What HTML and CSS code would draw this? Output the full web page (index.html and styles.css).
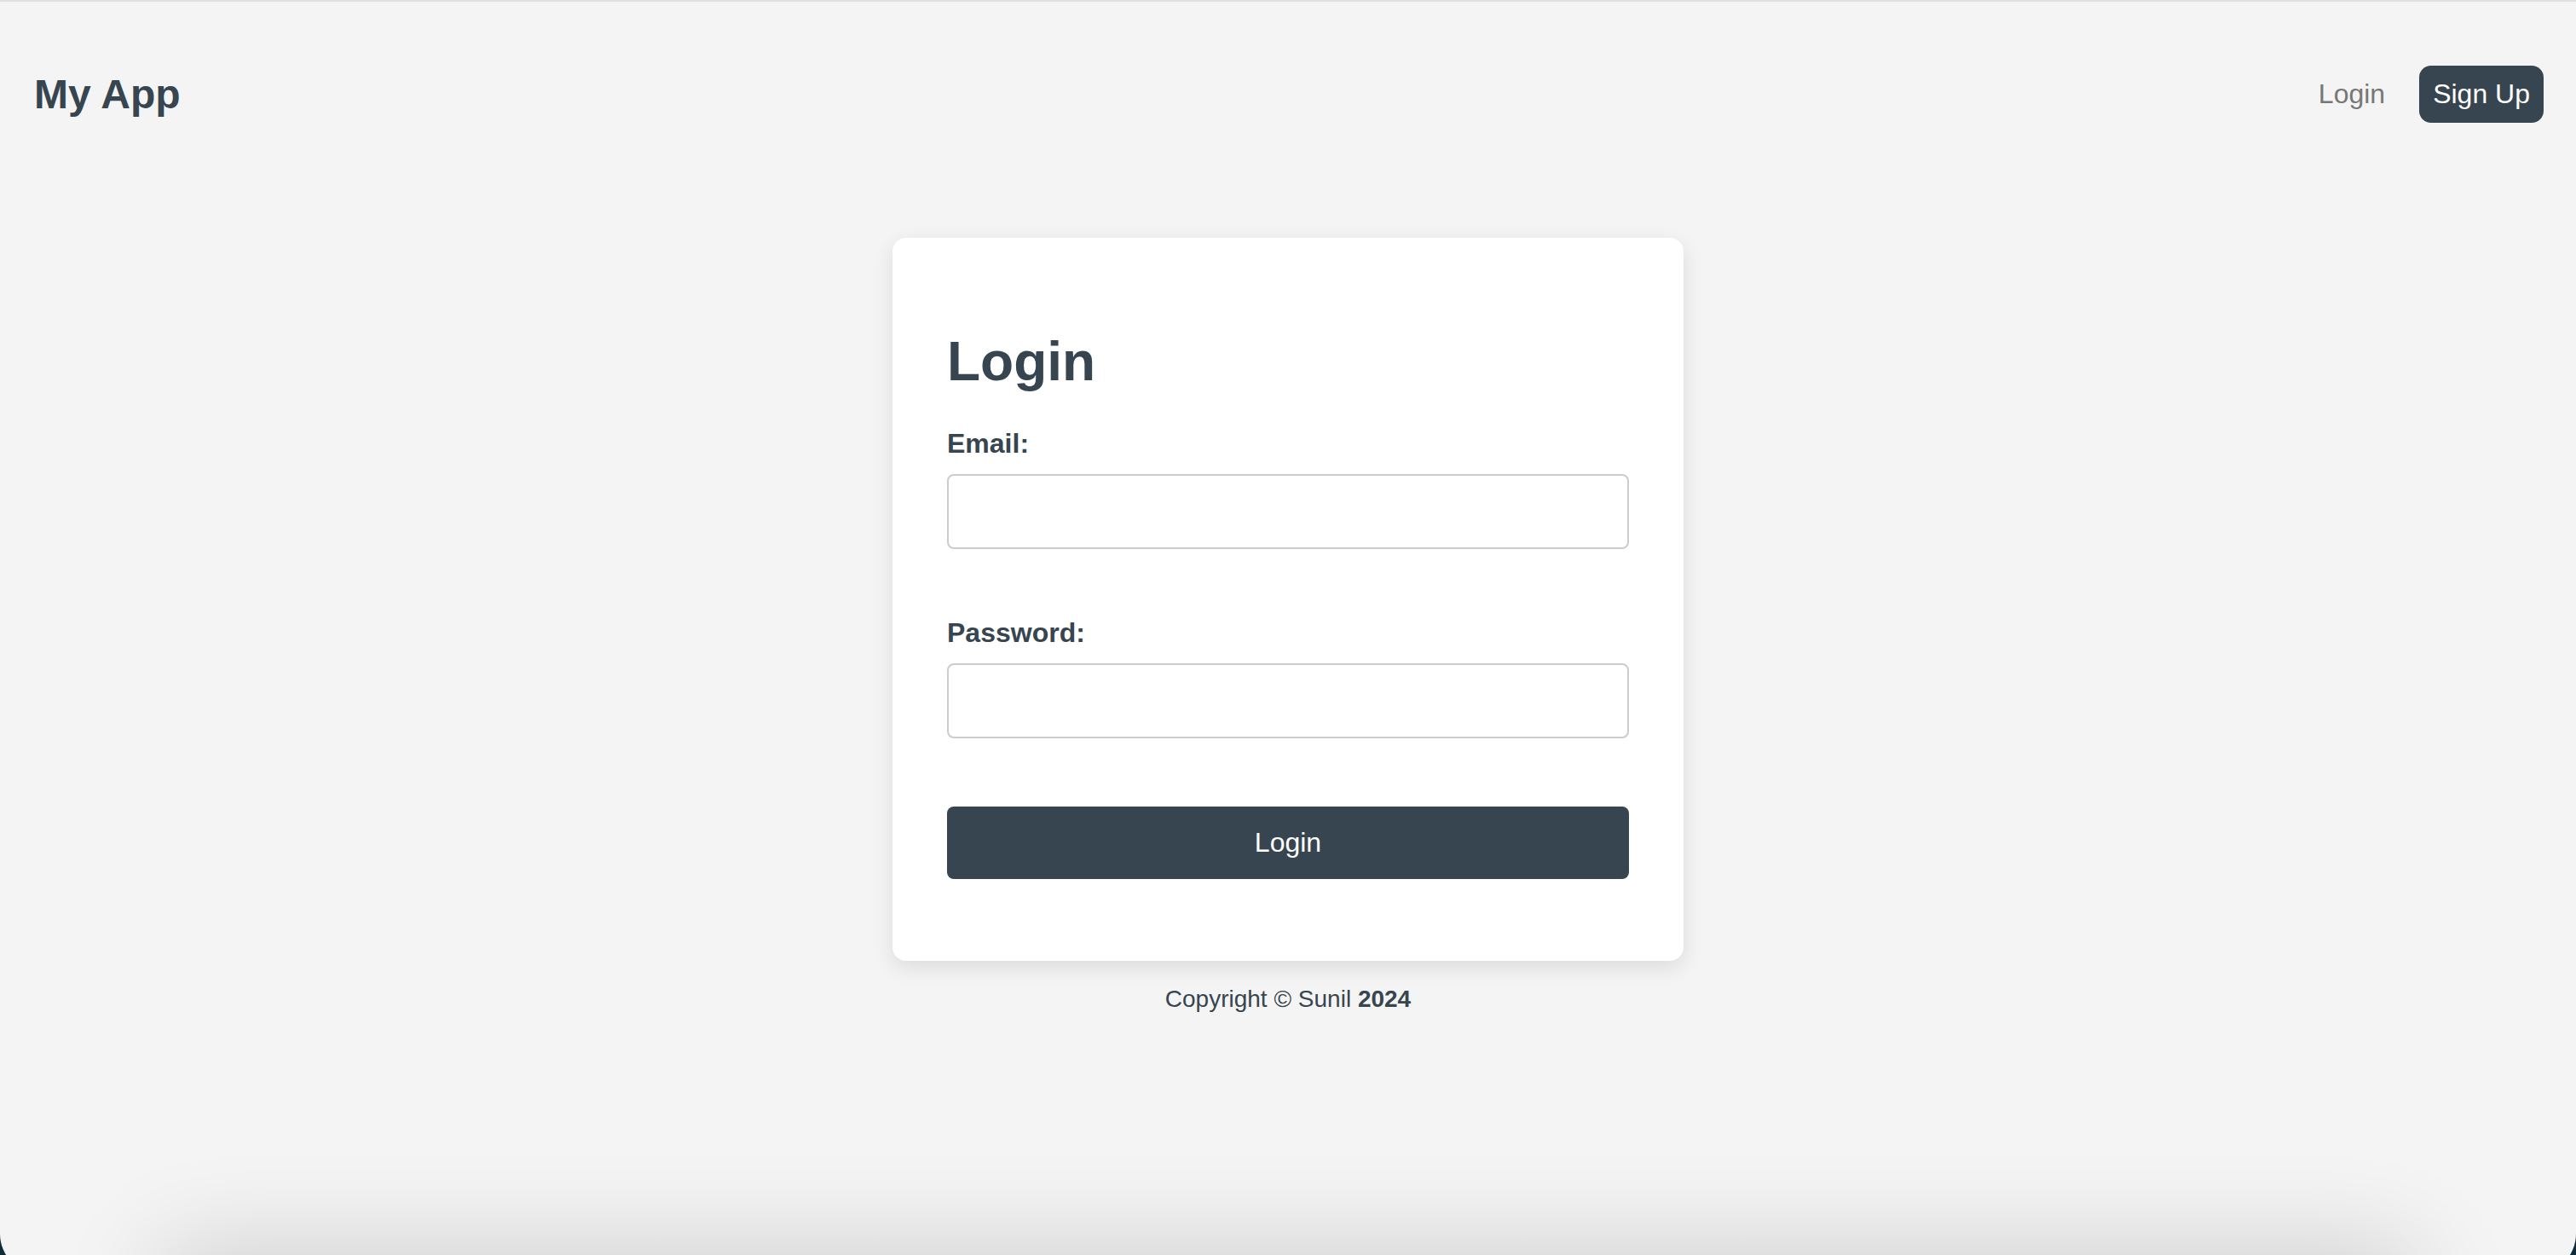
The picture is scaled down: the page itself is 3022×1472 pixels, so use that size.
FILE: index.html
```html
<!DOCTYPE html>
<html lang="en">
<head>
<meta charset="utf-8">
<title>My App - Login</title>
<link rel="stylesheet" href="styles.css">
</head>
<body>
<div class="window">
  <header class="navbar">
    <div class="brand">My App</div>
    <nav class="nav-links">
      <a class="nav-link" href="#">Login</a>
      <a class="nav-btn" href="#">Sign Up</a>
    </nav>
  </header>
  <main class="main">
    <section class="card">
      <h1 class="card-title">Login</h1>
      <form class="form">
        <div class="form-group">
          <label class="form-label" for="email">Email:</label>
          <input class="form-input" id="email" type="email">
        </div>
        <div class="form-group">
          <label class="form-label" for="password">Password:</label>
          <input class="form-input" id="password" type="password">
        </div>
        <button class="submit-btn" type="button">Login</button>
      </form>
    </section>
    <footer class="footer">Copyright © Sunil <strong>2024</strong></footer>
  </main>
</div>
</body>
</html>
```
FILE: styles.css
```css
html, body {
  margin: 0;
  padding: 0;
  overflow: hidden;
  background: #0f2b3a;
}

body {
  font-family: "Liberation Sans", Arial, Helvetica, sans-serif;
  color: #36454f;
}

.window {
  height: calc(100vh + 23px);
  background: #f4f4f4;
  border-top: 2px solid #dfdfdf;
  border-radius: 0 0 48px 48px;
  overflow: hidden;
  box-sizing: border-box;
}

.window::after {
  content: "";
  position: fixed;
  left: 190px;
  right: 190px;
  bottom: -100px;
  height: 100px;
  box-shadow: 0 0 120px rgba(0, 0, 0, 0.18);
  pointer-events: none;
}

.navbar {
  display: flex;
  justify-content: space-between;
  align-items: center;
  padding: 75px 38px 75px 40px;
}

.brand {
  font-size: 48px;
  font-weight: 700;
  line-height: 54px;
  color: #36454f;
}

.nav-links {
  display: flex;
  align-items: center;
  gap: 40px;
}

.nav-link {
  font-size: 32px;
  line-height: 67px;
  color: #777777;
  text-decoration: none;
}

.nav-btn {
  display: block;
  height: 67px;
  line-height: 67px;
  padding: 0 16px;
  font-size: 32px;
  color: #ffffff;
  background: #36454f;
  border-radius: 14px;
  text-decoration: none;
}

.main {
  display: flex;
  flex-direction: column;
  align-items: center;
  padding-top: 60px;
}

.card {
  width: 928px;
  box-sizing: border-box;
  padding: 64px 64px 96px;
  background: #ffffff;
  border-radius: 16px;
  box-shadow: 0 8px 24px rgba(0, 0, 0, 0.1);
}

.card-title {
  margin: 44px 0 41px;
  font-size: 64px;
  line-height: 74px;
  font-weight: 700;
  color: #36454f;
}

.form {
  display: flex;
  flex-direction: column;
}

.form-group {
  display: flex;
  flex-direction: column;
  margin-bottom: 80px;
}

.form-label {
  font-size: 32px;
  line-height: 37px;
  font-weight: 700;
  color: #36454f;
  margin-bottom: 17px;
}

.form-input {
  height: 88px;
  box-sizing: border-box;
  border: 2px solid #cccccc;
  border-radius: 8px;
  background: #ffffff;
  padding: 0 20px;
  font-size: 32px;
  font-family: "Liberation Sans", Arial, sans-serif;
  outline: none;
}

.submit-btn {
  height: 85px;
  border: none;
  border-radius: 8px;
  background: #36454f;
  color: #ffffff;
  font-family: "Liberation Sans", Arial, sans-serif;
  font-size: 32px;
  cursor: pointer;
}

.footer {
  margin-top: 29px;
  font-size: 28px;
  line-height: 32px;
  color: #36454f;
}

.footer strong {
  font-weight: 700;
}
```
